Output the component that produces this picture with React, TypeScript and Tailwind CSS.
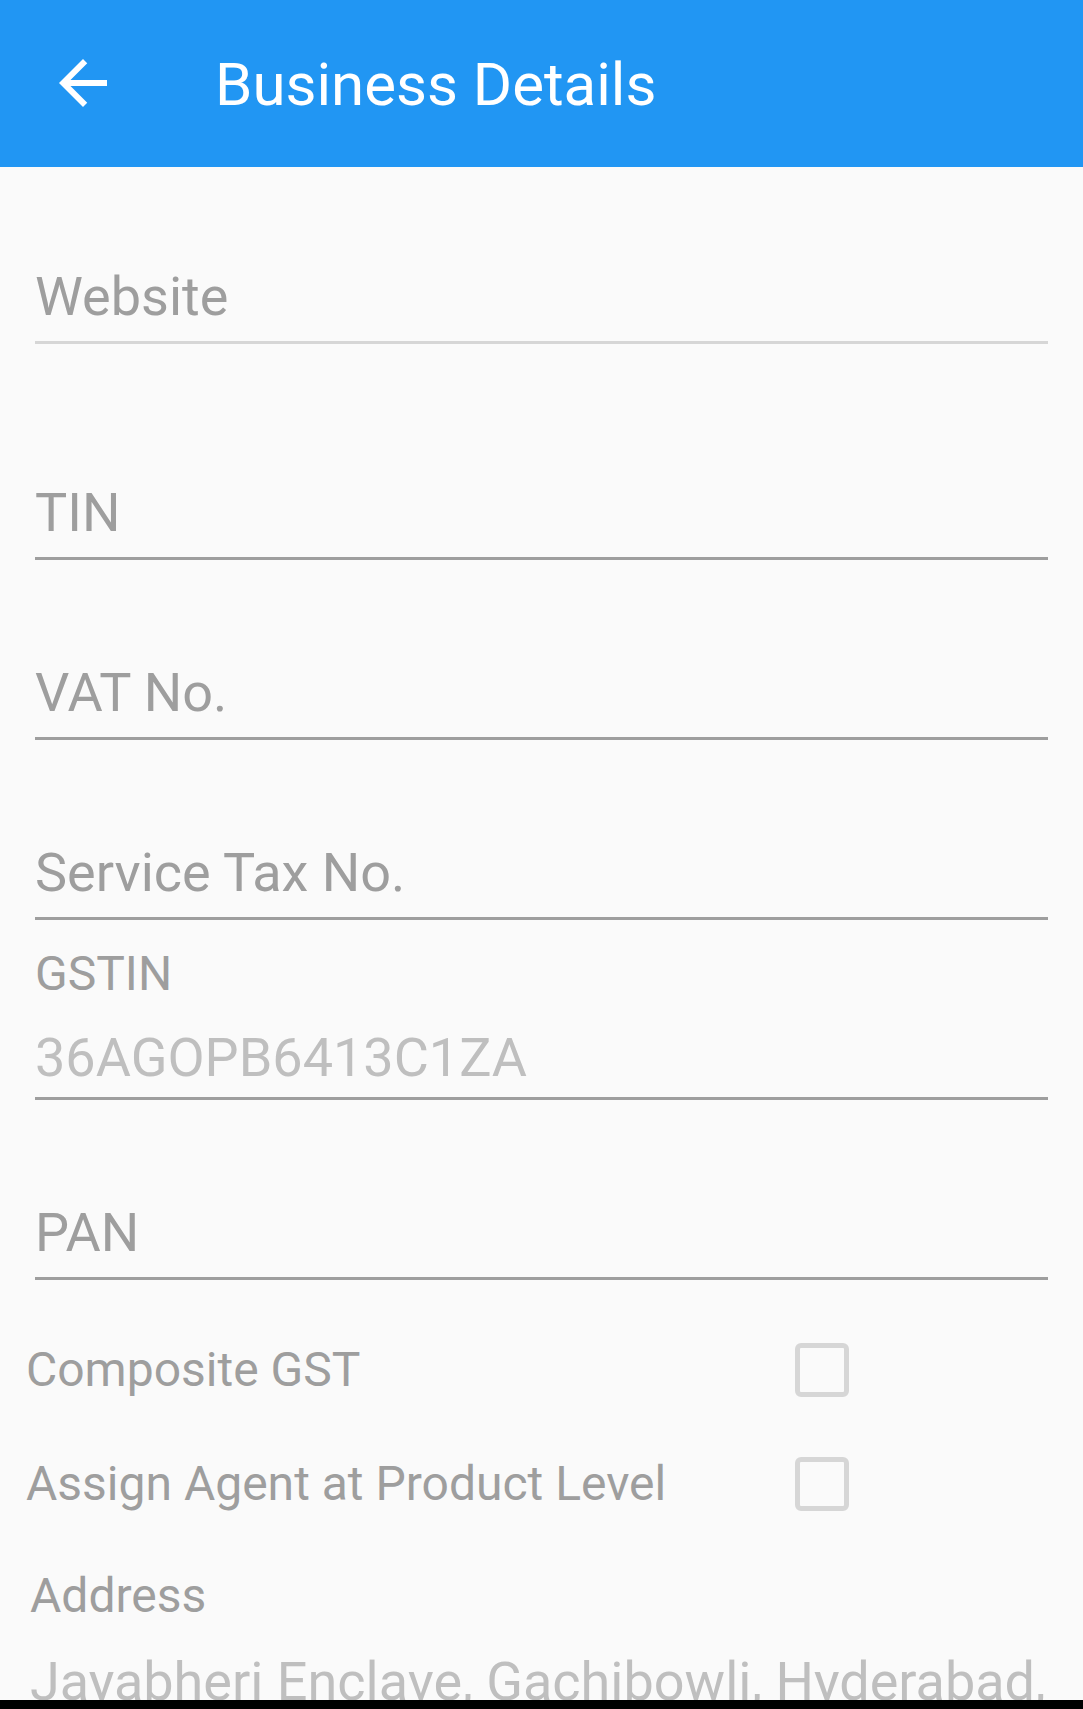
import React from 'react';

interface FieldProps {
  label: string;
  className?: string;
  lineClass?: string;
}

// plain text input: hint + underline
const Field: React.FC<FieldProps> = ({ label, className = '', lineClass = 'bg-[#9e9e9e]' }) => (
  <div className={`px-[35px] ${className}`}>
    <div className="text-[54px] leading-[64px] text-[#9e9e9e] whitespace-nowrap">{label}</div>
    <div className={`mt-[12px] h-[3px] ${lineClass}`} />
  </div>
);

const CheckRow: React.FC<{ label: string; className?: string }> = ({ label, className = '' }) => (
  <div className={`flex items-center h-[54px] pl-[26px] ${className}`}>
    <div className="w-[769px] text-[48px] leading-[56px] text-[#9e9e9e] whitespace-nowrap">{label}</div>
    <div className="w-[54px] h-[54px] rounded-[6px] border-[5px] border-[#d6d6d6]" />
  </div>
);

const BackArrow = () => (
  <svg viewBox="0 0 24 24" className="w-[72px] h-[72px] ml-[47px] mt-[47px] shrink-0" fill="#ffffff">
    <path d="M20 11H7.83l5.59-5.59L12 4l-8 8 8 8 1.41-1.41L7.83 13H20v-2z" />
  </svg>
);

export default function App() {
  return (
    <div className="w-full h-[1709px] overflow-hidden flex flex-col bg-[#fafafa] font-['Roboto',sans-serif]">
      <header className="h-[167px] shrink-0 flex items-start bg-[#2196f3]">
        <BackArrow />
        <h1 className="ml-[96px] pt-[50px] text-[60px] leading-[70px] text-white font-normal whitespace-nowrap">
          Business Details
        </h1>
      </header>

      <div className="flex-1 min-h-0 overflow-hidden">
        <Field label="Website" className="mt-[98px]" lineClass="bg-[#d6d6d6]" />
        <Field label="TIN" className="mt-[137px]" />
        <Field label="VAT No." className="mt-[101px]" />
        <Field label="Service Tax No." className="mt-[101px]" />

        <div className="px-[35px] mt-[26px]">
          <div className="text-[48px] leading-[56px] text-[#9e9e9e]">GSTIN</div>
          <div className="mt-[24px] text-[54px] leading-[64px] text-[#bfbfbf]">36AGOPB6413C1ZA</div>
          <div className="mt-[7px] h-[3px] bg-[#9e9e9e]" />
        </div>

        <Field label="PAN" className="mt-[101px]" />

        <CheckRow label="Composite GST" className="mt-[63px]" />
        <CheckRow label="Assign Agent at Product Level" className="mt-[60px]" />

        <div className="pl-[30px] mt-[57px]">
          <div className="text-[48px] leading-[56px] text-[#9e9e9e]">Address</div>
          <div className="mt-[26px] text-[54px] leading-[64px] text-[#bfbfbf] whitespace-nowrap">
            Jayabheri Enclave, Gachibowli, Hyderabad,
          </div>
        </div>
      </div>

      <div className="h-[9px] shrink-0 bg-black" />
    </div>
  );
}
